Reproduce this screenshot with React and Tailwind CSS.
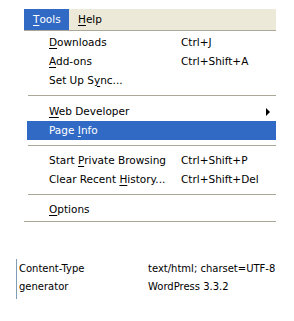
import React from "react";

const U = ({ children }) => <span className="underline underline-offset-2">{children}</span>;

function Item({ label, shortcut, active, arrow, h = "h-[19px]" }) {
  return (
    <div
      className={`relative flex items-center ${h} ml-[3px] pl-[22px] ${active ? "bg-[#316AC5] text-white" : "text-black"}`}
    >
      <span className="w-[132px] whitespace-nowrap">{label}</span>
      {shortcut && <span className="whitespace-nowrap">{shortcut}</span>}
      {arrow && (
        <span className="absolute left-[239px] top-[6px] w-0 h-0 border-y-[4px] border-y-transparent border-l-[4px] border-l-black" />
      )}
    </div>
  );
}

function Sep({ h = "h-[12px]" }) {
  return (
    <div className={`${h} flex items-center pl-[4px]`}>
      <div className="w-full border-t border-[#aca899] border-b border-b-white" />
    </div>
  );
}

export default function App() {
  return (
    <div
      className="w-[294px] h-[321px] bg-white overflow-hidden"
      style={{ fontFamily: '"DejaVu Sans", sans-serif' }}
    >
      <div className="pt-[9px] pl-[24px]">
        <div className="w-[252px] text-[10.5px]">
          <div className="flex h-[22px] bg-[#ECE9D8] border-b border-[#aca899]">
            <div className="w-[45px] pl-[9px] flex items-center bg-[#316AC5] text-white">
              <U>T</U>ools
            </div>
            <div className="pl-[9px] flex items-center text-black">
              <U>H</U>elp
            </div>
          </div>
          <div className="pt-[2px] border-b border-[#aca899] pb-[2px]">
            <Item label={<><U>D</U>ownloads</>} shortcut="Ctrl+J" />
            <Item label={<><U>A</U>dd-ons</>} shortcut="Ctrl+Shift+A" />
            <Item label={<>Set Up S<U>y</U>nc...</>} />
            <Sep h="h-[12px]" />
            <Item label={<><U>W</U>eb Developer</>} arrow />
            <Item label={<>Page <U>I</U>nfo</>} active />
            <Sep h="h-[11px]" />
            <Item label={<>Start <U>P</U>rivate Browsing</>} shortcut="Ctrl+Shift+P" />
            <Item label={<>Clear Recent <U>H</U>istory...</>} shortcut="Ctrl+Shift+Del" />
            <Sep h="h-[12px]" />
            <Item label={<><U>O</U>ptions</>} h="h-[18px]" />
          </div>
        </div>
      </div>
      <div className="mt-[43px] ml-[16px] h-[40px] border-l border-[#7f9db9] pl-[2px] text-[10px] text-black">
        <div className="-mt-[6px]">
          <div className="flex h-[18px] items-center">
            <span className="w-[129px]">Content-Type</span>
            <span>text/html; charset=UTF-8</span>
          </div>
          <div className="flex h-[18px] items-center">
            <span className="w-[129px]">generator</span>
            <span>WordPress 3.3.2</span>
          </div>
        </div>
      </div>
    </div>
  );
}
